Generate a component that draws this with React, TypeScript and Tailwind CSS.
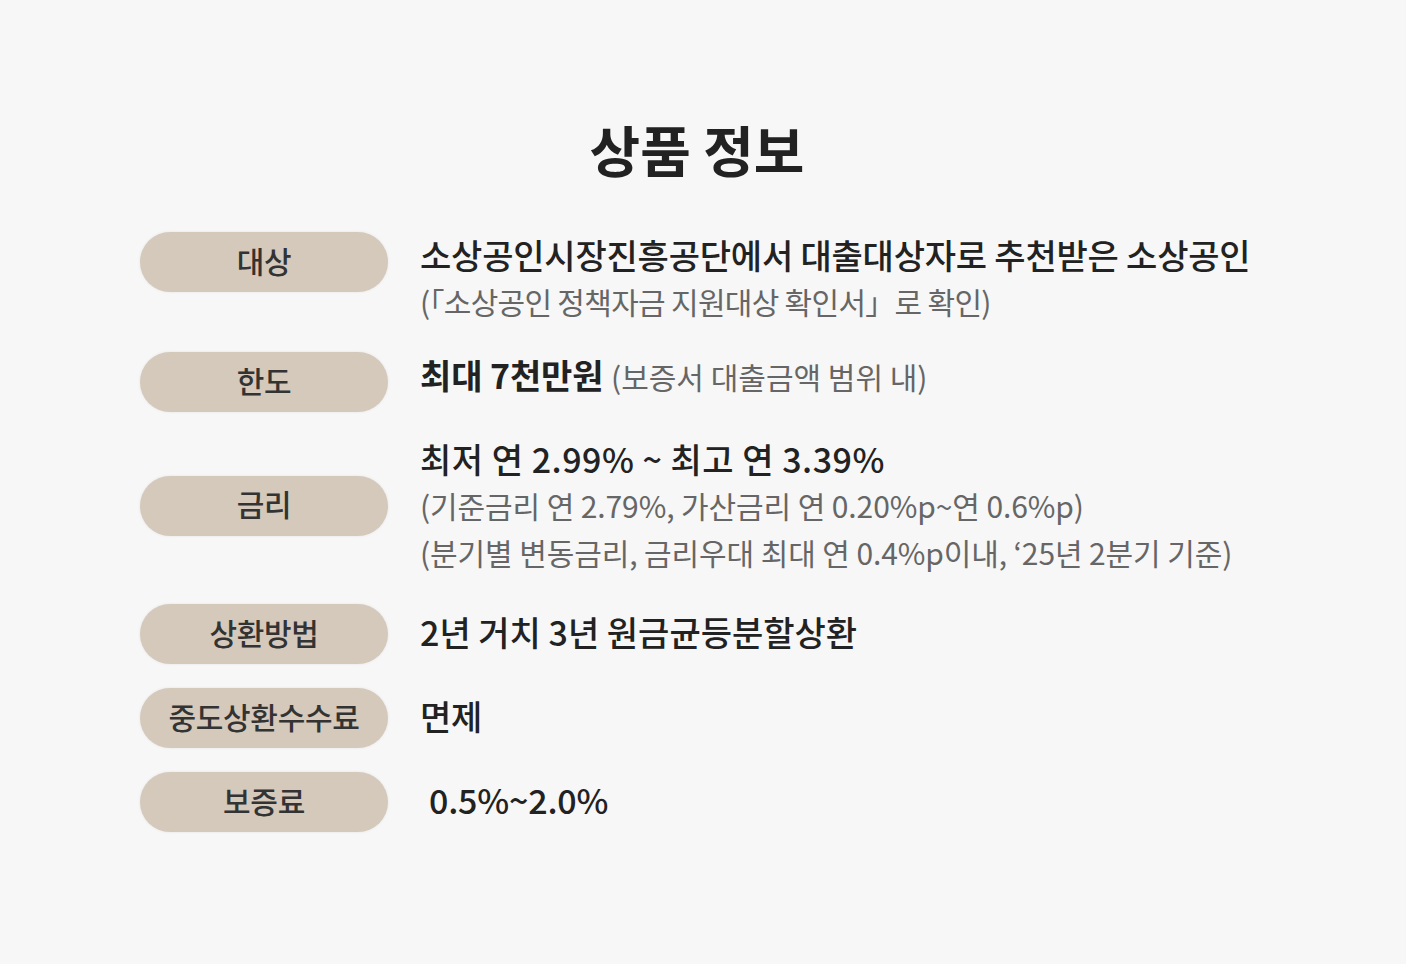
import React from "react";

const font = { fontFamily: '"Noto Sans CJK KR", "Noto Sans", sans-serif' };

function Pill({ children }: { children: React.ReactNode }) {
  return (
    <div className="flex h-[60px] w-[248px] shrink-0 items-center justify-center rounded-full bg-[#d4c9bb] pb-[4px] text-[30px] font-medium tracking-[-0.3px] text-[#333333] shadow-[0_0_3px_rgba(0,0,0,0.08)]">
      {children}
    </div>
  );
}

export default function App() {
  return (
    <div className="min-h-[964px] w-full bg-[#f7f7f7]" style={font}>
      <div className="pr-[12px] pt-[108px] text-center text-[55px] font-bold leading-[80px] text-[#222222]">
        상품 정보
      </div>
      <div className="mt-[44px] flex flex-col pl-[140px]">
        {/* 대상 */}
        <div className="flex items-start gap-[32px]">
          <Pill>대상</Pill>
          <div className="flex flex-col">
            <div className="text-[34px] font-medium leading-[46px] tracking-[-0.2px] text-[#222222]">
              소상공인시장진흥공단에서 대출대상자로 추천받은 소상공인
            </div>
            <div className="text-[30px] leading-[46px] tracking-[-0.7px] text-[#666666]">
              (「소상공인 정책자금 지원대상 확인서」로 확인)
            </div>
          </div>
        </div>
        {/* 한도 */}
        <div className="mt-[28px] flex items-start gap-[32px]">
          <Pill>한도</Pill>
          <div className="text-[34px] leading-[46px] tracking-[-0.1px] text-[#222222]">
            <span className="font-bold">최대 7천만원</span>{" "}
            <span className="text-[30px] font-normal tracking-[0px] text-[#666666]">
              (보증서 대출금액 범위 내)
            </span>
          </div>
        </div>
        {/* 금리 */}
        <div className="mt-[23px] flex items-center gap-[32px]">
          <Pill>금리</Pill>
          <div className="flex flex-col">
            <div className="text-[34px] font-medium leading-[47px] tracking-[0.5px] text-[#222222]">
              최저 연 2.99% ~ 최고 연 3.39%
            </div>
            <div className="text-[30px] leading-[47px] tracking-[-0.1px] text-[#666666]">
              (기준금리 연 2.79%, 가산금리 연 0.20%p~연 0.6%p)
            </div>
            <div className="text-[30px] leading-[47px] tracking-[-0.1px] text-[#666666]">
              (분기별 변동금리, 금리우대 최대 연 0.4%p이내, ‘25년 2분기 기준)
            </div>
          </div>
        </div>
        {/* 상환방법 */}
        <div className="mt-[28px] flex items-center gap-[32px]">
          <Pill>상환방법</Pill>
          <div className="pb-[4px] text-[34px] font-medium leading-[46px] tracking-[0px] text-[#222222]">
            2년 거치 3년 원금균등분할상환
          </div>
        </div>
        {/* 중도상환수수료 */}
        <div className="mt-[24px] flex items-center gap-[32px]">
          <Pill>중도상환수수료</Pill>
          <div className="pb-[4px] text-[34px] font-medium leading-[46px] tracking-[-0.3px] text-[#222222]">
            면제
          </div>
        </div>
        {/* 보증료 */}
        <div className="mt-[24px] flex items-center gap-[32px]">
          <Pill>보증료</Pill>
          <div className="pb-[4px] pl-[9px] text-[34px] font-medium leading-[46px] tracking-[-0.2px] text-[#222222]">
            0.5%~2.0%
          </div>
        </div>
      </div>
    </div>
  );
}
